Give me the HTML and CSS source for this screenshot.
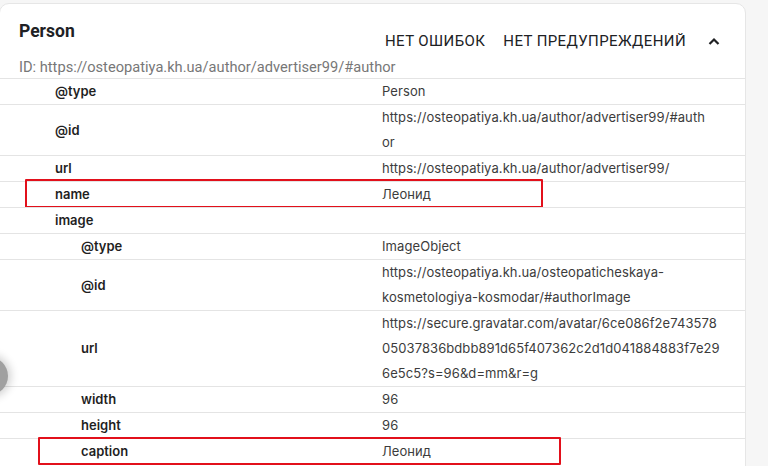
FILE: index.html
```html
<!DOCTYPE html>
<html lang="ru">
<head>
<meta charset="utf-8">
<title>Person</title>
<link rel="stylesheet" href="styles.css">
</head>
<body>
<div class="card">
  <div class="head">
    <div class="top">
      <div class="title">Person</div>
      <div class="actions">
        <span>Нет ошибок</span>
        <span>Нет предупреждений</span>
        <svg class="chev" width="14" height="10" viewBox="0 0 14 10"><path d="M2.5 8 L7 3.5 L11.5 8" fill="none" stroke="#202124" stroke-width="2.2"/></svg>
      </div>
    </div>
    <div class="id">ID: https://osteopatiya.kh.ua/author/advertiser99/#author</div>
  </div>
  <div class="rows">
    <div class="row"><div class="key">@type</div><div class="val">Person</div></div>
    <div class="row"><div class="key">@id</div><div class="val">https://osteopatiya.kh.ua/author/advertiser99/#auth<br>or</div></div>
    <div class="row"><div class="key">url</div><div class="val">https://osteopatiya.kh.ua/author/advertiser99/</div></div>
    <div class="row"><div class="key">name</div><div class="val">Леонид</div><div class="mark mark-name"></div></div>
    <div class="row"><div class="key">image</div><div class="val"></div></div>
    <div class="row"><div class="key nested">@type</div><div class="val">ImageObject</div></div>
    <div class="row"><div class="key nested">@id</div><div class="val">https://osteopatiya.kh.ua/osteopaticheskaya-<br>kosmetologiya-kosmodar/#authorImage</div></div>
    <div class="row"><div class="key nested">url</div><div class="val">https://secure.gravatar.com/avatar/6ce086f2e743578<br>05037836bdbb891d65f407362c2d1d041884883f7e29<br>6e5c5?s=96&amp;d=mm&amp;r=g</div></div>
    <div class="row"><div class="key nested">width</div><div class="val">96</div></div>
    <div class="row"><div class="key nested">height</div><div class="val">96</div></div>
    <div class="row"><div class="key nested">caption</div><div class="val">Леонид</div><div class="mark mark-caption"></div></div>
  </div>
</div>
<div class="fab"></div>
</body>
</html>
```

FILE: styles.css
```css
html, body {
  margin: 0;
  padding: 0;
  background: #f6f6f6;
  overflow: hidden;
  height: 466px;
}
body {
  font-family: Inter, "Noto Sans", sans-serif;
  color: #202124;
}
.card {
  box-sizing: border-box;
  width: 747px;
  margin: 3px 0 0 -1px;
  background: #fff;
  border: 1px solid #e6e6e6;
  border-radius: 10px;
  min-height: 500px;
}
.head {
  padding: 17px 0 1px 19px;
}
.top {
  display: flex;
  justify-content: space-between;
  align-items: flex-start;
}
.title {
  font-family: Roboto, "Liberation Sans", sans-serif;
  font-weight: 700;
  font-size: 17.5px;
  line-height: 22px;
  margin-top: -1px;
}
.actions {
  display: flex;
  align-items: center;
  margin-top: 10px;
  padding-right: 24px;
  font-family: Roboto, "Liberation Sans", sans-serif;
  font-size: 15px;
  line-height: 20px;
  text-transform: uppercase;
  letter-spacing: 0.4px;
  color: #202124;
}
.actions span + span {
  margin-left: 18px;
}
.chev {
  margin-left: 21px;
  display: block;
}
.id {
  margin-top: 6px;
  font-family: Roboto, "Liberation Sans", sans-serif;
  font-size: 14.65px;
  line-height: 20px;
  color: #777;
}
.row {
  position: relative;
  display: grid;
  grid-template-columns: 382px 1fr;
  border-top: 1px solid #e4e4e4;
  line-height: 25px;
  font-size: 13px;
}
.key {
  padding-left: 55px;
  font-weight: 600;
  color: #1f1f1f;
  align-self: center;
}
.key.nested {
  padding-left: 81px;
}
.val {
  color: #3c3c3c;
  white-space: nowrap;
  letter-spacing: 0.08px;
}
.mark {
  position: absolute;
  box-sizing: border-box;
  border: 2px solid #e2101b;
  border-radius: 1px;
}
.mark-name {
  left: 25px;
  top: -3px;
  width: 518px;
  height: 29px;
}
.mark-caption {
  left: 38px;
  top: -2px;
  width: 523px;
  height: 28px;
}
.fab {
  position: absolute;
  left: -30px;
  top: 357px;
  width: 38px;
  height: 38px;
  border-radius: 50%;
  background: #a0a0a0;
  box-shadow: 0 0 8px 3px rgba(0,0,0,0.18);
}
```
